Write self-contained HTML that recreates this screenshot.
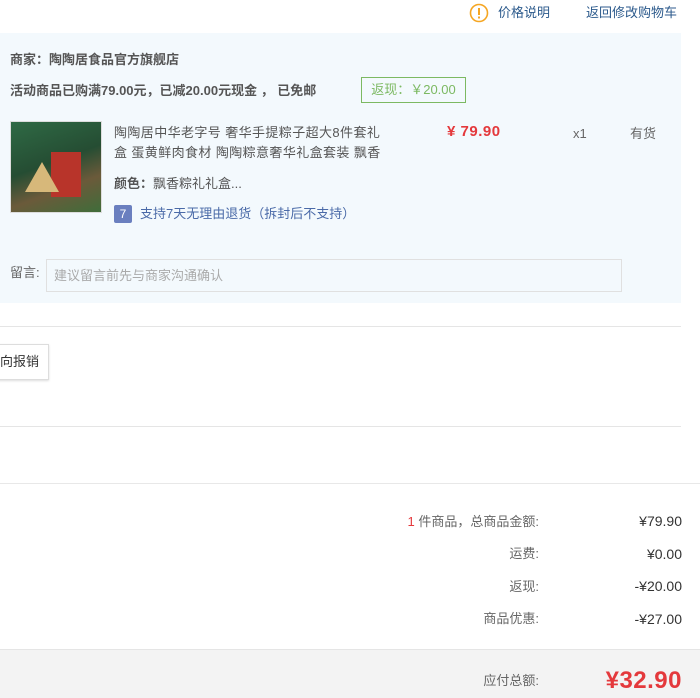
<!DOCTYPE html>
<html><head><meta charset="utf-8"><style>
*{margin:0;padding:0;box-sizing:border-box}
body{width:700px;height:698px;overflow:hidden;background:#fff;font-family:"Liberation Sans","Noto Sans CJK SC",sans-serif;font-size:13px;line-height:16px;color:#666;position:relative}
.a{position:absolute;white-space:nowrap}
.v{font-size:14px;line-height:16px;color:#333}
</style></head><body>
<svg class="a" style="left:469px;top:3px" width="20" height="20" viewBox="0 0 20 20"><circle cx="10" cy="10" r="8.5" fill="none" stroke="#f5a623" stroke-width="1.6"/><rect x="9" y="5" width="2" height="7" fill="#f5a623"/><rect x="9" y="13.5" width="2" height="2" fill="#f5a623"/></svg>
<div class="a" style="left:498px;top:5px;color:#2c5a8c">价格说明</div>
<div class="a" style="left:586px;top:5px;color:#2c5a8c">返回修改购物车</div>
<div class="a" style="left:0;top:33px;width:681px;height:270px;background:#f3f9fd"></div>
<div class="a" style="left:10px;top:52px;font-weight:bold;color:#555">商家：陶陶居食品官方旗舰店</div>
<div class="a" style="left:10px;top:83px;font-weight:bold;color:#555">活动商品已购满79.00元，已减20.00元现金 ， 已免邮</div>
<div class="a" style="left:361px;top:77px;width:105px;height:26px;border:1px solid #7cb962;color:#7cb962;line-height:24px;text-align:center">返现：￥20.00</div>
<div class="a" style="left:10px;top:121px;width:92px;height:92px;border:1px solid #ddd;background:linear-gradient(160deg,#2f6a45 0%,#254d33 45%,#6b5a3a 70%,#3f6d3a 100%)"><div style="position:absolute;left:40px;top:30px;width:30px;height:45px;background:#b8342a"></div><div style="position:absolute;left:14px;top:40px;width:34px;height:30px;background:#d7b87a;clip-path:polygon(50% 0,100% 100%,0 100%)"></div></div>
<div class="a" style="left:114px;top:123px;line-height:20px;color:#555;letter-spacing:0.4px">陶陶居中华老字号 奢华手提粽子超大8件套礼<br>盒 蛋黄鲜肉食材 陶陶粽意奢华礼盒套装 飘香</div>
<div class="a" style="left:447px;top:124px;color:#e4393c;font-weight:bold;font-size:15px;letter-spacing:0.5px">¥ 79.90</div>
<div class="a" style="left:573px;top:126px;color:#666">x1</div>
<div class="a" style="left:630px;top:126px;color:#666">有货</div>
<div class="a" style="left:114px;top:176px;color:#555"><b>颜色：</b>飘香粽礼礼盒...</div>
<div class="a" style="left:114px;top:205px;width:18px;height:18px;background:#6a7fbf;border-radius:2px;color:#fff;font-size:12px;text-align:center;line-height:18px">7</div>
<div class="a" style="left:140px;top:206px;color:#4a6aa8">支持7天无理由退货（拆封后不支持）</div>
<div class="a" style="left:10px;top:265px;color:#666">留言:</div>
<div class="a" style="left:46px;top:259px;width:576px;height:33px;border:1px solid #e0e0e0;background:#f3f9fd;color:#aaa;padding-left:7px;line-height:31px">建议留言前先与商家沟通确认</div>
<div class="a" style="left:0;top:326px;width:681px;height:1px;background:#e5e5e5"></div>
<div class="a" style="left:-5px;top:344px;width:54px;height:36px;border:1px solid #ddd;background:#fff;box-shadow:0 1px 2px #ddd;color:#333;line-height:34px;padding-left:4px">向报销</div>
<div class="a" style="left:0;top:426px;width:681px;height:1px;background:#e5e5e5"></div>
<div class="a" style="left:0;top:483px;width:700px;height:1px;background:#e8e8e8"></div>
<div class="a" style="right:161px;top:514px;color:#666"><span style="color:#e4393c">1</span> 件商品，总商品金额:</div>
<div class="a v" style="right:18px;top:513px">¥79.90</div>
<div class="a" style="right:161px;top:546px">运费:</div>
<div class="a v" style="right:18px;top:546px">¥0.00</div>
<div class="a" style="right:161px;top:579px">返现:</div>
<div class="a v" style="right:18px;top:578px">-¥20.00</div>
<div class="a" style="right:161px;top:611px">商品优惠:</div>
<div class="a v" style="right:18px;top:611px">-¥27.00</div>
<div class="a" style="left:0;top:649px;width:700px;height:49px;background:#f3f3f3;border-top:1px solid #e5e5e5"></div>
<div class="a" style="right:161px;top:673px">应付总额:</div>
<div class="a" style="right:18px;top:668px;color:#e4393c;font-weight:bold;font-size:24px;line-height:26px;letter-spacing:0.5px">¥32.90</div>
</body></html>
